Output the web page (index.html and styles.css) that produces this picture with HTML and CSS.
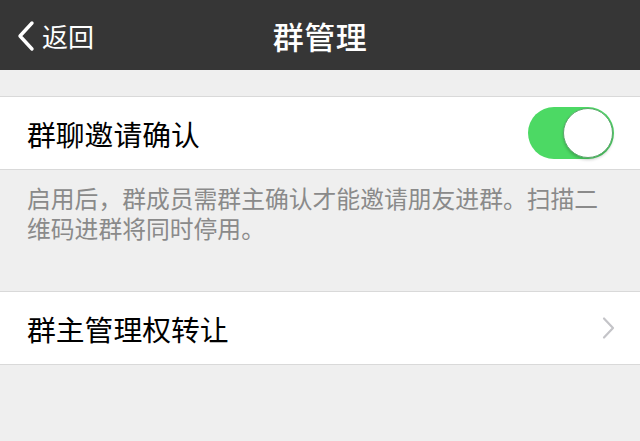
FILE: index.html
```html
<!DOCTYPE html>
<html lang="zh-CN">
<head>
    <meta charset="UTF-8">
    <meta name="viewport" content="width=device-width, initial-scale=1.0">
    <title>群管理</title>
    <link rel="stylesheet" href="styles.css">
</head>
<body>

    <div class="nav-bar">
        <div class="nav-back">
            <svg class="back-icon" width="22" height="32" viewBox="0 0 22 32">
                <path d="M17 3 L5 16 L17 29" fill="none" stroke="#ffffff" stroke-width="3.4" stroke-linecap="round" stroke-linejoin="round"/>
            </svg>
            <span>返回</span>
        </div>
        <div class="nav-title">群管理</div>
    </div>

    <div class="group">
        <div class="cell">
            <span class="cell-label">群聊邀请确认</span>
            <div class="switch on">
                <div class="switch-knob"></div>
            </div>
        </div>
    </div>
    <p class="group-tip">启用后，群成员需群主确认才能邀请朋友进群。扫描二维码进群将同时停用。</p>

    <div class="group">
        <div class="cell">
            <span class="cell-label">群主管理权转让</span>
            <svg class="chevron" width="16" height="24" viewBox="0 0 16 24">
                <path d="M4 2.5 L13 12 L4 21.5" fill="none" stroke="#c4c4c8" stroke-width="2.2" stroke-linecap="round" stroke-linejoin="round"/>
            </svg>
        </div>
    </div>

</body>
</html>
```

FILE: styles.css
```css
* {
    margin: 0;
    padding: 0;
    box-sizing: border-box;
}

body {
    font-family: 'Noto Sans CJK SC', 'Noto Sans', sans-serif;
    background-color: #efefef;
    color: #000;
    width: 640px;
    height: 441px;
    overflow: hidden;
}

.nav-bar {
    height: 70px;
    background-color: #363636;
    color: #ffffff;
    display: flex;
    align-items: center;
    justify-content: center;
    position: relative;
}

.nav-back {
    position: absolute; /* sits over the left side of the bar */
    left: 15px;
    top: 0;
    height: 70px;
    display: flex;
    align-items: center;
    gap: 5px;
    font-size: 26px;
}

.back-icon {
    margin-top: 2px;
}

.nav-title {
    font-size: 31px;
    font-weight: 500;
    letter-spacing: 0.5px;
}

.group {
    margin-top: 26px;
    background-color: #ffffff;
    border-top: 1px solid #d9d9d9;
    border-bottom: 1px solid #d9d9d9;
}

.cell {
    height: 72px;
    padding: 0 26px 0 27px;
    display: flex;
    align-items: center;
    justify-content: space-between;
}

.cell-label {
    font-size: 28.8px;
}

.switch {
    width: 86px;
    height: 52px;
    border-radius: 26px;
    background-color: #4cd964;
    display: flex;
    align-items: center;
    justify-content: flex-end;
    padding: 1px;
}

.switch-knob {
    width: 50px;
    height: 50px;
    border-radius: 50%;
    background-color: #ffffff;
    border: 1px solid #5ca56c;
    box-shadow: 0 2px 3px rgba(0, 0, 0, 0.2);
}

.chevron {
    margin-right: -2px;
}

.group-tip {
    padding: 13px 27px 20px;
    font-size: 23.8px;
    line-height: 30px;
    color: #8a8a8a;
}

.group-tip + .group {
    margin-top: 28px;
}
```
